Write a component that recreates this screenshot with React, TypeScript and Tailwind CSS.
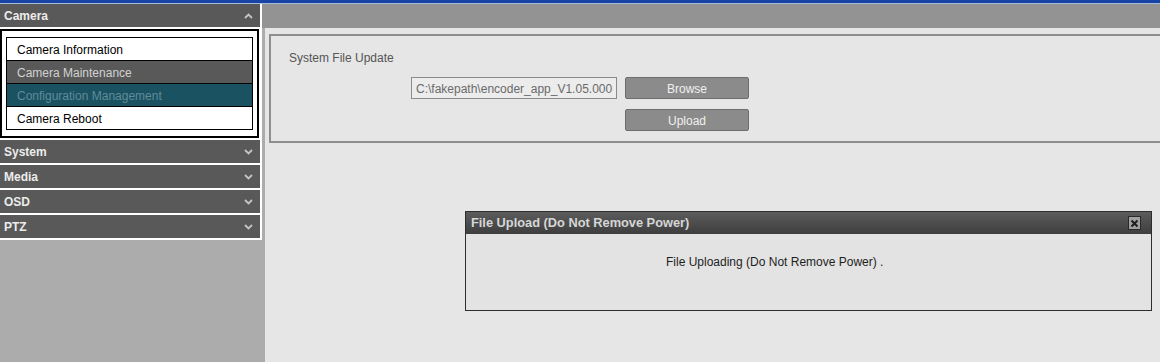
import React from "react";

const font = { fontFamily: '"Liberation Sans", Arial, sans-serif' };

function Chevron({ up }: { up?: boolean }) {
  return (
    <svg width="9" height="6" viewBox="0 0 9 6" className="mr-[7px]">
      <polyline
        points={up ? "1,5 4.5,1.5 8,5" : "1,1 4.5,4.5 8,1"}
        fill="none"
        stroke="#c4c4c4"
        strokeWidth="1.8"
      />
    </svg>
  );
}

function Header({ label, up }: { label: string; up?: boolean }) {
  return (
    <div className="h-[23px] w-[260px] bg-[#595959] flex items-center justify-between pl-[4px]">
      <span className="text-[12px] font-bold text-[#ececec] leading-none pt-[1px]">{label}</span>
      <Chevron up={up} />
    </div>
  );
}

function Item({ label, cls }: { label: string; cls: string }) {
  return (
    <div className={`h-[23px] border-t border-black flex items-center pl-[10px] pt-[2px] text-[12px] leading-none ${cls}`}>
      {label}
    </div>
  );
}

export default function App() {
  return (
    <div className="relative w-[1160px] h-[362px] overflow-hidden bg-[#e6e6e6] flex flex-col" style={font}>
      <div className="h-[3px] bg-[#1544a6]" />
      <div className="h-[1px] bg-[#a3bbd7]" />
      <div className="flex flex-1">
        <aside className="w-[262px] bg-[#acacac] flex flex-col">
          <div className="w-[262px] bg-white flex flex-col gap-[2px] pr-[2px] pb-[2px]">
            <Header label="Camera" up />
            <div className="w-[259px] border-2 border-black bg-white pt-[6px] pb-[6px] pl-[4px] pr-[4px]">
              <div className="border-l border-r border-b border-black">
                <Item label="Camera Information" cls="bg-white text-black" />
                <Item label="Camera Maintenance" cls="bg-[#595959] text-[#d2d2d2]" />
                <Item label="Configuration Management" cls="bg-[#1b5262] text-[#5f8c98]" />
                <Item label="Camera Reboot" cls="bg-white text-black" />
              </div>
            </div>
            <Header label="System" />
            <Header label="Media" />
            <Header label="OSD" />
            <Header label="PTZ" />
          </div>
        </aside>
        <main className="flex-1 flex flex-col">
          <div className="h-[24px] bg-[#939393]" />
          <div className="flex-1 border-l-[3px] border-[#acacac] pl-[4px] pt-[6px]">
            <div className="h-[109px] border-2 border-r-0 border-[#8e8e8e] pl-[18px] pt-[15px]">
              <div className="text-[12px] leading-[14px] text-[#555555]">System File Update</div>
              <div className="ml-[122px] mt-[12px] flex flex-col gap-[10px]">
                <div className="flex gap-[8px]">
                  <div className="w-[206px] h-[22px] border border-[#8a8a8a] bg-[#ececec] flex items-center pl-[4px] pt-[1px] text-[12px] text-[#6a6a6a] whitespace-nowrap overflow-hidden">
                    C:\fakepath\encoder_app_V1.05.000
                  </div>
                  <button className="w-[124px] h-[22px] bg-[#8b8b8b] border border-[#6e6e6e] rounded-[2px] pt-[2px] text-[12px] text-[#f0f0f0] flex items-center justify-center">
                    Browse
                  </button>
                </div>
                <div className="flex">
                  <div className="w-[214px]" />
                  <button className="w-[124px] h-[22px] bg-[#8b8b8b] border border-[#6e6e6e] rounded-[2px] pt-[2px] text-[12px] text-[#f0f0f0] flex items-center justify-center">
                    Upload
                  </button>
                </div>
              </div>
            </div>
          </div>
        </main>
      </div>

      <div className="absolute left-[465px] top-[211px] w-[687px] h-[100px] border border-[#2e2e2e] bg-[#e3e3e3] flex flex-col">
        <div className="h-[22px] bg-gradient-to-b from-[#5c5c5c] to-[#3e3e3e] flex items-center justify-between pl-[5px] pr-[10px]">
          <span className="text-[12.8px] font-bold text-[#d6d6d6] leading-none">File Upload (Do Not Remove Power)</span>
          <div className="w-[13px] h-[14px] bg-[#a0a0a0] border border-[#2a2a2a] flex items-center justify-center">
            <svg width="9" height="9" viewBox="0 0 9 9">
              <path d="M1.5 1.5 L7.5 7.5 M7.5 1.5 L1.5 7.5" stroke="#1e1e1e" strokeWidth="2" />
            </svg>
          </div>
        </div>
        <div className="pl-[200px] pt-[21px] text-[12px] leading-[14px] text-[#1e1e1e]">
          File Uploading (Do Not Remove Power) .
        </div>
      </div>
    </div>
  );
}
